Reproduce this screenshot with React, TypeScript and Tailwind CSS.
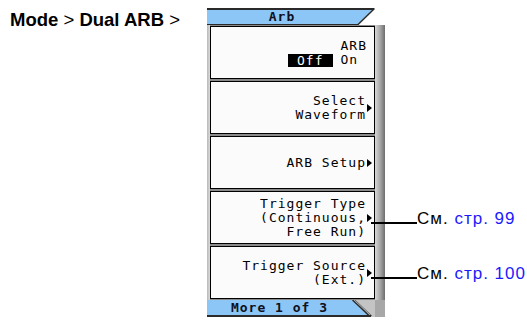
import React from "react";

const BLUE = "#8cc6f6";

function Arrow() {
  return (
    <svg width="5" height="8" viewBox="0 0 5 8" className="ml-[1px] shrink-0">
      <polygon points="0,0 5,4 0,8" fill="#000" />
    </svg>
  );
}

function Callout({ page }: { page: string }) {
  return (
    <div className="absolute left-[160px] top-[17px] flex items-start">
      <div className="w-[46px] h-[2px] bg-black mt-[13px]" />
      <div className="whitespace-nowrap text-[17px] leading-[20px] font-['Liberation_Sans',Arial,sans-serif] text-black">
        См. <span className="text-[#1a1aff]">стр. {page}</span>
      </div>
    </div>
  );
}

function Btn({
  lines,
  arrow,
  callout,
}: {
  lines: string[];
  arrow?: boolean;
  callout?: string;
}) {
  return (
    <div className="relative h-[53px] border border-black bg-[#fbfbfb] flex items-center justify-end pr-[2px]">
      <div className="text-right leading-[14px]">
        {lines.map((l, i) => (
          <div key={i} className="whitespace-pre">
            {l}
          </div>
        ))}
      </div>
      {arrow && <Arrow />}
      {callout && <Callout page={callout} />}
    </div>
  );
}

export default function App() {
  return (
    <div className="w-[527px] h-[320px] bg-white flex overflow-hidden">
      <div className="w-[207px] shrink-0 pl-[10px] pt-[10px] text-[18.5px] leading-[20px] font-['Liberation_Sans',Arial,sans-serif] text-black whitespace-nowrap">
        <span className="font-bold">Mode</span> &gt; <span className="font-bold">Dual ARB</span> &gt;
      </div>

      <div className="w-[178px] shrink-0 mt-[8px] flex flex-col font-['DejaVu_Sans_Mono',monospace] text-[13px] tracking-[1px] text-black">
        {/* header */}
        <div className="h-[17px] flex">
          <div
            className="flex-1 border-t-2 border-b border-[#2a2a2a] flex items-center justify-center font-bold leading-[14px] text-[#101020]"
            style={{ backgroundColor: BLUE }}
          >
            Arb
          </div>
          <svg width="28" height="17" viewBox="0 0 28 17" className="shrink-0">
            <polygon points="0,0 17,0 0,17" fill={BLUE} />
            <line x1="0" y1="1" x2="17" y2="1" stroke="#2a2a2a" strokeWidth="2" />
            <line x1="17.5" y1="0.5" x2="0.5" y2="17" stroke="#2a2a2a" strokeWidth="1.5" />
            <line x1="0" y1="16.5" x2="1" y2="16.5" stroke="#2a2a2a" strokeWidth="1" />
          </svg>
        </div>

        {/* body */}
        <div className="flex">
          <div className="w-[3px] bg-gradient-to-r from-[#b8b8b8] to-[#dcdcdc]" />
          <div className="flex-1 flex flex-col gap-[2px] bg-[#8a8a8a] pt-[1px] pb-[1px]">
            <div className="relative h-[53px] border border-black bg-[#fbfbfb] flex items-center justify-end pr-[7px] leading-[14px]">
              <div className="flex items-end">
                <div className="bg-black text-white px-[9px] h-[13px] flex items-center leading-[13px] mr-[8px]">
                  Off
                </div>
                <div className="flex flex-col">
                  <div className="whitespace-pre">ARB</div>
                  <div className="whitespace-pre">On</div>
                </div>
              </div>
            </div>
            <Btn lines={["Select", "Waveform"]} arrow />
            <Btn lines={["ARB Setup"]} arrow />
            <Btn
              lines={["Trigger Type", "(Continuous,", "Free Run)"]}
              arrow
              callout="99"
            />
            <Btn lines={["Trigger Source", "(Ext.)"]} arrow callout="100" />
          </div>
          <div className="w-[10px] bg-gradient-to-r from-[#d8d8d8] via-[#a8a8a8] to-[#6e6e6e]" />
        </div>

        {/* footer */}
        <div className="h-[17px] flex">
          <div
            className="w-[145px] border-b-2 border-[#2a2a2a] flex items-center justify-center font-bold leading-[14px] text-[#101020]"
            style={{ backgroundColor: BLUE }}
          >
            More 1 of 3
          </div>
          <svg width="33" height="17" viewBox="0 0 33 17" className="shrink-0">
            <polygon points="0,0 33,0 33,17 18,17" fill="#c4c4c4" />
            <polygon points="0,0 0,17 18,17" fill={BLUE} />
            <line x1="0" y1="16" x2="19" y2="16" stroke="#2a2a2a" strokeWidth="2" />
            <line x1="0.5" y1="0" x2="18" y2="16.5" stroke="#2a2a2a" strokeWidth="1.5" />
            <line x1="3" y1="0" x2="20" y2="16" stroke="#6a6a6a" strokeWidth="1" />
            <rect x="23" y="0" width="10" height="17" fill="#8a8a8a" opacity="0.5" />
          </svg>
        </div>
      </div>
    </div>
  );
}
